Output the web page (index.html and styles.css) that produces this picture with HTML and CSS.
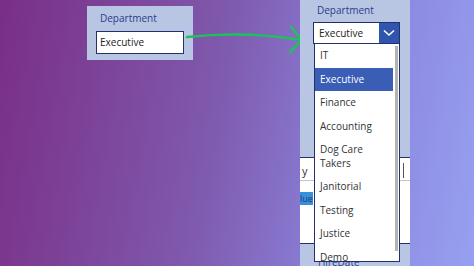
FILE: index.html
```html
<!doctype html>
<html>
	<head>
		<meta charset="utf-8"/>
		<title>Department</title>
		<link rel="stylesheet" href="styles.css">
	</head>
	<body>
		<div class="stage">
			<!-- 原始控件 -->
			<div class="card">
				<div class="label">Department</div>
				<div class="textbox">Executive</div>
			</div>

			<svg class="arrow" width="130" height="40" viewBox="0 0 130 40">
				<path d="M2 17 C 40 13, 80 14, 116 20" fill="none" stroke="#1fc15c" stroke-width="2.6" stroke-linecap="round"/>
				<path d="M106 7 L117 20 L105 32" fill="none" stroke="#1fc15c" stroke-width="2.6" stroke-linecap="round" stroke-linejoin="round"/>
			</svg>

			<!-- 下拉框 -->
			<div class="panel">
				<div class="label label2">Department</div>
				<div class="select">
					<span class="sel-text">Executive</span>
					<span class="sel-btn">
						<svg width="12" height="8" viewBox="0 0 12 8"><path d="M1 1.5 L6 6 L11 1.5" fill="none" stroke="#fff" stroke-width="1.6"/></svg>
					</span>
				</div>
				<div class="behind">
					<div class="row-input"><span class="y">y</span><span class="caret"></span></div>
					<div class="row-area"><span class="hl">lue</span></div>
					<div class="hire">HireDate</div>
				</div>
				<div class="list">
					<div class="items">
						<div class="item">IT</div>
						<div class="item on">Executive</div>
						<div class="item">Finance</div>
						<div class="item">Accounting</div>
						<div class="item">Dog Care<br>Takers</div>
						<div class="item">Janitorial</div>
						<div class="item">Testing</div>
						<div class="item">Justice</div>
						<div class="item">Demo</div>
					</div>
					<div class="scroll"></div>
				</div>
			</div>
		</div>
	</body>
</html>
```

FILE: styles.css
```css
html,body{margin:0;padding:0;}
body{width:474px;height:266px;overflow:hidden;font-family:"Open Sans","Noto Sans",sans-serif;
	background:linear-gradient(100deg,#7a2e86 0%,#7f5aae 45%,#8b86df 75%,#97a0f0 100%);}
.stage{position:relative;display:flex;align-items:flex-start;padding-left:87px;height:266px;}

.card{margin-top:6px;width:106px;height:54px;box-sizing:border-box;background:#b8c5e3;padding:5px 9px 0 9px;}
.label{font-size:10px;color:#2b3d8a;line-height:14px;padding-left:4px;}
.textbox{margin-top:6px;height:23px;box-sizing:border-box;border:1.5px solid #25306a;background:#fff;
	font-size:10px;color:#222;line-height:20px;padding-left:3px;}

.arrow{position:absolute;left:185px;top:20px;}

.panel{position:relative;margin-left:107px;width:110px;height:266px;background:#b8c5e3;}
.label2{margin:3px 0 0 13px;}
.select{display:flex;margin:5px 0 0 13px;width:87px;height:22px;box-sizing:border-box;border:1px solid #25306a;background:#fff;}
.sel-text{flex:1;font-size:10px;color:#222;line-height:20px;padding-left:5px;}
.sel-btn{width:20px;background:#2f55ad;display:flex;align-items:center;justify-content:center;}

.behind{margin-top:113px;}
.row-input{height:22px;border-top:1px solid #25306a;border-bottom:1.5px solid #c6c6c6;background:#fff;position:relative;}
.y{font-size:11px;color:#333;padding-left:2px;line-height:20px;}
.caret{position:absolute;left:103px;top:5px;width:1px;height:15px;background:#555;}
.row-area{height:63px;background:#fff;border-bottom:1px solid #25306a;padding-top:4px;box-sizing:border-box;}
.hl{font-size:9px;background:#3b8fd8;color:#1a3b7a;}
.hire{font-size:10px;color:#2b3d8a;padding:12px 0 0 18px;line-height:12px;}

.list{position:absolute;left:14px;top:44px;width:86px;height:218px;box-sizing:border-box;background:#fff;
	border:1px solid #25306a;border-top:0;display:flex;overflow:hidden;}
.items{width:78px;}
.item{font-size:10px;color:#333;line-height:13.5px;padding:5px 0 5px 5px;}
.item.on{background:#3a5db6;color:#fff;}
.scroll{width:3px;margin:2px 0 10px 2px;background:#b3b3b3;}
```
